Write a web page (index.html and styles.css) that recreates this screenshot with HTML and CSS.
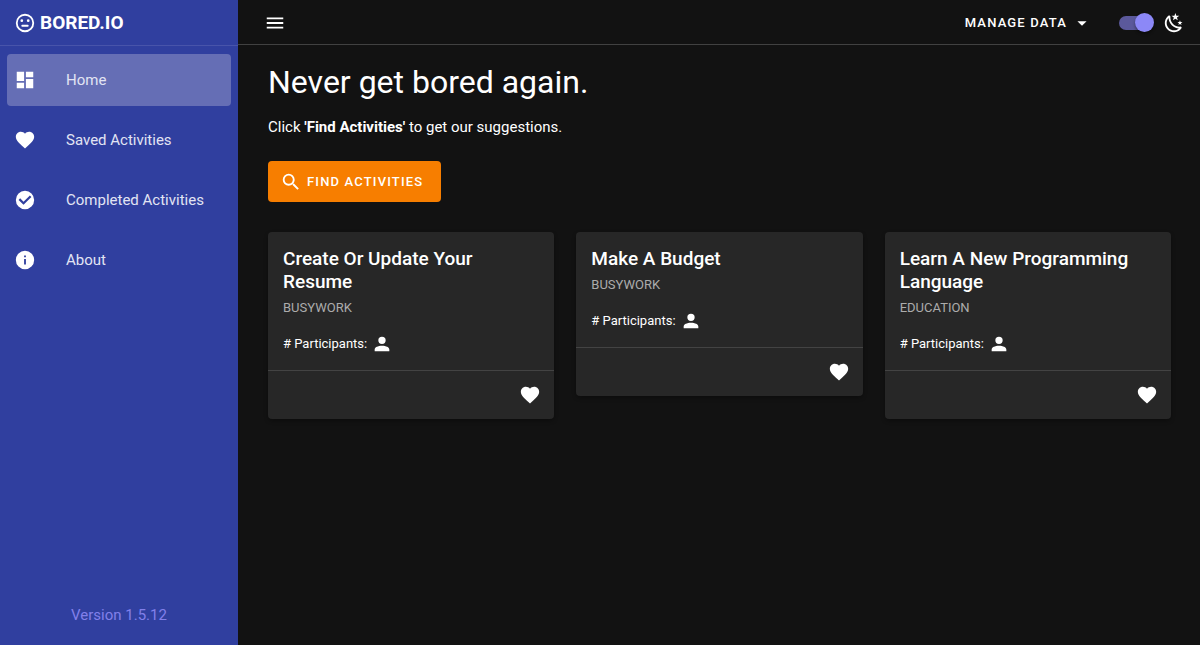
FILE: index.html
```html
<!DOCTYPE html>
<html lang="en">
<head>
<meta charset="utf-8">
<meta name="viewport" content="width=device-width, initial-scale=1">
<title>Bored.io</title>
<link rel="stylesheet" href="styles.css">
</head>
<body>
<svg class="sprite" aria-hidden="true">
  <symbol id="heart" viewBox="0 0 24 24"><path d="M12,21.35L10.55,20.03C5.4,15.36 2,12.27 2,8.5C2,5.41 4.42,3 7.5,3C9.24,3 10.91,3.81 12,5.08C13.09,3.81 14.76,3 16.5,3C19.58,3 22,5.41 22,8.5C22,12.27 18.6,15.36 13.45,20.03L12,21.35Z"/></symbol>
  <symbol id="account" viewBox="0 0 24 24"><path d="M12,4A4,4 0 0,1 16,8A4,4 0 0,1 12,12A4,4 0 0,1 8,8A4,4 0 0,1 12,4M12,14C16.42,14 20,15.79 20,18V20H4V18C4,15.79 7.58,14 12,14Z"/></symbol>
</svg>
<div class="app">
  <aside class="sidebar">
    <div class="brand">
      <svg class="icon" viewBox="0 0 24 24" aria-hidden="true"><path d="M8.5,11A1.5,1.5 0 0,1 7,9.5A1.5,1.5 0 0,1 8.5,8A1.5,1.5 0 0,1 10,9.5A1.5,1.5 0 0,1 8.5,11M15.5,11A1.5,1.5 0 0,1 14,9.5A1.5,1.5 0 0,1 15.5,8A1.5,1.5 0 0,1 17,9.5A1.5,1.5 0 0,1 15.5,11M12,20A8,8 0 0,0 20,12A8,8 0 0,0 12,4A8,8 0 0,0 4,12A8,8 0 0,0 12,20M12,2A10,10 0 0,1 22,12A10,10 0 0,1 12,22A10,10 0 0,1 2,12A10,10 0 0,1 12,2M9,14H15A1,1 0 0,1 16,15A1,1 0 0,1 15,16H9A1,1 0 0,1 8,15A1,1 0 0,1 9,14Z"/></svg>
      <span>BORED.IO</span>
    </div>
    <nav class="nav">
      <a class="nav-link active" href="#home"><svg class="icon" viewBox="0 0 24 24" aria-hidden="true"><path d="M13,3V9H21V3M13,21H21V11H13M3,21H11V15H3M3,13H11V3H3V13Z"/></svg><span>Home</span></a>
      <a class="nav-link" href="#saved"><svg class="icon" aria-hidden="true"><use href="#heart"/></svg><span>Saved Activities</span></a>
      <a class="nav-link" href="#completed"><svg class="icon" viewBox="0 0 24 24" aria-hidden="true"><path d="M12,2A10,10 0 0,1 22,12A10,10 0 0,1 12,22A10,10 0 0,1 2,12A10,10 0 0,1 12,2M10.4,17.3L19,8.7L17.3,7L10.4,13.9L6.7,10.2L5,11.9L10.4,17.3Z"/></svg><span>Completed Activities</span></a>
      <a class="nav-link" href="#about"><svg class="icon" viewBox="0 0 24 24" aria-hidden="true"><path d="M13,9H11V7H13M13,17H11V11H13M12,2A10,10 0 0,0 2,12A10,10 0 0,0 12,22A10,10 0 0,0 22,12A10,10 0 0,0 12,2Z"/></svg><span>About</span></a>
    </nav>
    <p class="version">Version 1.5.12</p>
  </aside>
  <div class="page">
    <header class="topbar">
      <button class="icon-button" type="button" aria-label="Toggle menu"><svg class="icon" viewBox="0 0 24 24" aria-hidden="true"><path d="M3,6H21V8H3V6M3,11H21V13H3V11M3,16H21V18H3V16Z"/></svg></button>
      <div class="tools">
        <button class="manage" type="button">MANAGE DATA<svg class="icon" viewBox="0 0 24 24" aria-hidden="true"><path d="M7,10L12,15L17,10H7Z"/></svg></button>
        <label class="theme">
          <input class="switch" type="checkbox" role="switch" aria-label="Dark theme" checked>
          <svg class="icon" viewBox="0 0 24 24" aria-hidden="true"><path d="M17.75,4.09L15.22,6.03L16.13,9.09L13.5,7.28L10.87,9.09L11.78,6.03L9.25,4.09L12.44,4L13.5,1L14.56,4L17.75,4.09M21.25,11L19.61,12.25L20.2,14.23L18.5,13.06L16.8,14.23L17.39,12.25L15.75,11L17.81,10.95L18.5,9L19.19,10.95L21.25,11M18.97,15.95C19.8,15.87 20.69,17.05 20.16,17.8C19.84,18.25 19.5,18.67 19.08,19.07C15.17,23 8.84,23 4.94,19.07C1.03,15.17 1.03,8.83 4.94,4.93C5.34,4.53 5.76,4.17 6.21,3.85C6.96,3.32 8.14,4.21 8.06,5.04C7.79,7.9 8.75,10.87 10.95,13.06C13.14,15.26 16.1,16.22 18.97,15.95M17.33,17.97C14.5,17.81 11.7,16.64 9.53,14.5C7.36,12.31 6.2,9.5 6.04,6.68C3.23,9.82 3.34,14.64 6.35,17.66C9.37,20.67 14.19,20.78 17.33,17.97Z"/></svg>
        </label>
      </div>
    </header>
    <main class="content">
      <h1 class="headline">Never get bored again.</h1>
      <p class="intro">Click <b>'Find Activities'</b> to get our suggestions.</p>
      <button class="find" type="button"><svg class="icon" viewBox="0 0 24 24" aria-hidden="true"><path d="M9.5,3A6.5,6.5 0 0,1 16,9.5C16,11.11 15.41,12.59 14.44,13.73L14.71,14H15.5L20.5,19L19,20.5L14,15.5V14.71L13.73,14.44C12.59,15.41 11.11,16 9.5,16A6.5,6.5 0 0,1 3,9.5A6.5,6.5 0 0,1 9.5,3M9.5,5C7,5 5,7 5,9.5C5,12 7,14 9.5,14C12,14 14,12 14,9.5C14,7 12,5 9.5,5Z"/></svg>FIND ACTIVITIES</button>
      <section class="cards" aria-label="Suggestions">
        <article class="card">
          <div class="card-body">
            <h2 class="card-title">Create Or Update Your Resume</h2>
            <p class="card-type">BUSYWORK</p>
            <p class="people"># Participants: <svg class="icon" role="img" aria-label="1"><use href="#account"/></svg></p>
          </div>
          <div class="card-actions"><button class="icon-button" type="button" aria-label="Save activity"><svg class="icon" aria-hidden="true"><use href="#heart"/></svg></button></div>
        </article>
        <article class="card">
          <div class="card-body">
            <h2 class="card-title">Make A Budget</h2>
            <p class="card-type">BUSYWORK</p>
            <p class="people"># Participants: <svg class="icon" role="img" aria-label="1"><use href="#account"/></svg></p>
          </div>
          <div class="card-actions"><button class="icon-button" type="button" aria-label="Save activity"><svg class="icon" aria-hidden="true"><use href="#heart"/></svg></button></div>
        </article>
        <article class="card">
          <div class="card-body">
            <h2 class="card-title">Learn A New Programming Language</h2>
            <p class="card-type">EDUCATION</p>
            <p class="people"># Participants: <svg class="icon" role="img" aria-label="1"><use href="#account"/></svg></p>
          </div>
          <div class="card-actions"><button class="icon-button" type="button" aria-label="Save activity"><svg class="icon" aria-hidden="true"><use href="#heart"/></svg></button></div>
        </article>
      </section>
    </main>
  </div>
</div>
</body>
</html>
```
FILE: styles.css
```css
* { box-sizing: border-box; }
body { margin: 0; background: #121212; color: #fff; font-family: Roboto, "Liberation Sans", sans-serif; font-size: 15px; line-height: 22px; }
h1, h2, p { margin: 0; }
button { padding: 0; border: 0; background: none; color: inherit; font: inherit; cursor: pointer; }
.sprite { display: none; }
.icon { display: block; flex: none; width: 22px; height: 22px; fill: currentColor; }
.icon-button { display: block; }

.app { display: flex; min-height: 100vh; }
.sidebar { display: flex; flex-direction: column; flex: none; width: 238px; background: #303f9f; }
.brand { display: flex; align-items: center; gap: 4px; height: 46px; padding: 0 14px; border-bottom: 1px solid #4854aa; font-size: 19px; font-weight: 700; }
.nav { display: flex; flex-direction: column; gap: 8px; padding: 8px 7px; }
.nav-link { display: flex; align-items: center; gap: 30px; height: 52px; padding: 0 7px; border-radius: 4px; color: #e2e4f3; text-decoration: none; }
.nav-link .icon { color: #fff; }
.active { background: #656eb5; }
.version { margin-top: auto; padding: 19px 0; color: #8280ea; text-align: center; }

.page { flex: 1; min-width: 0; }
.topbar { display: flex; align-items: center; justify-content: space-between; height: 45px; padding: 1px 15px 0 26px; border-bottom: 1px solid #414141; }
.tools { display: flex; align-items: center; gap: 26px; }
.manage { display: flex; align-items: center; gap: 4px; font-size: 13px; font-weight: 500; letter-spacing: 0.0893em; }
.theme { display: flex; align-items: center; gap: 9px; }
.switch { position: relative; width: 35px; height: 20px; margin: 0; appearance: none; cursor: pointer; }
.switch::before { content: ""; position: absolute; inset: 3px 4px 3px 0; border-radius: 7px; background: #5b599b; }
.switch::after { content: ""; position: absolute; top: 0; left: 0; width: 19px; height: 19px; border-radius: 50%; background: #bdbdbd; box-shadow: 0 2px 3px rgba(0, 0, 0, 0.4); }
.switch:checked::after { right: 0; left: auto; background: #8c88f7; }

.content { padding: 15px 29px 30px 30px; }
.headline { font-size: 32px; font-weight: 400; line-height: 45px; }
.intro { margin: 11px 0 23px; }
.find { display: flex; align-items: center; gap: 5px; height: 41px; padding: 0 18px 0 12px; border-radius: 4px; background: #f77e00; font-size: 13px; font-weight: 500; letter-spacing: 0.0893em; }
.cards { display: grid; grid-template-columns: repeat(3, 1fr); align-items: start; gap: 22px; margin-top: 30px; }
.card { border-radius: 4px; background: #272727; box-shadow: 0 2px 4px rgba(0, 0, 0, 0.3); }
.card-body { padding: 15px; }
.card-title { font-size: 19px; font-weight: 500; line-height: 23px; }
.card-type { margin: 4px 0 14px; color: #acacac; font-size: 13px; }
.people { display: flex; align-items: center; gap: 4px; font-size: 13px; }
.card-actions { display: flex; justify-content: flex-end; padding: 13px; border-top: 1px solid #434343; }
```
